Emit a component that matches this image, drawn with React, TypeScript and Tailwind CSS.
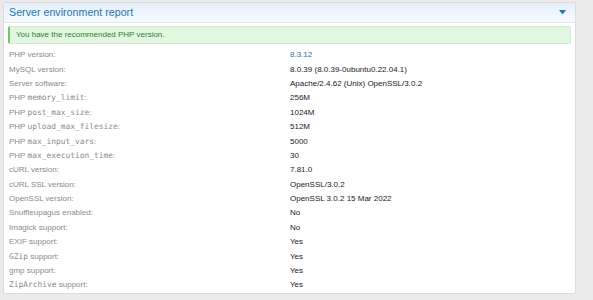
import React from "react";

type Part = { t: string; mono?: boolean };
type Row = { label: Part[]; value: string; link?: boolean };

const rows: Row[] = [
  { label: [{ t: "PHP version:" }], value: "8.3.12", link: true },
  { label: [{ t: "MySQL version:" }], value: "8.0.39 (8.0.39-0ubuntu0.22.04.1)" },
  { label: [{ t: "Server software:" }], value: "Apache/2.4.62 (Unix) OpenSSL/3.0.2" },
  { label: [{ t: "PHP " }, { t: "memory_limit", mono: true }, { t: ":" }], value: "256M" },
  { label: [{ t: "PHP " }, { t: "post_max_size", mono: true }, { t: ":" }], value: "1024M" },
  { label: [{ t: "PHP " }, { t: "upload_max_filesize", mono: true }, { t: ":" }], value: "512M" },
  { label: [{ t: "PHP " }, { t: "max_input_vars", mono: true }, { t: ":" }], value: "5000" },
  { label: [{ t: "PHP " }, { t: "max_execution_time", mono: true }, { t: ":" }], value: "30" },
  { label: [{ t: "cURL version:" }], value: "7.81.0" },
  { label: [{ t: "cURL SSL version:" }], value: "OpenSSL/3.0.2" },
  { label: [{ t: "OpenSSL version:" }], value: "OpenSSL 3.0.2 15 Mar 2022" },
  { label: [{ t: "Snuffleupagus enabled:" }], value: "No" },
  { label: [{ t: "Imagick support:" }], value: "No" },
  { label: [{ t: "EXIF support:" }], value: "Yes" },
  { label: [{ t: "GZip", mono: true }, { t: " support:" }], value: "Yes" },
  { label: [{ t: "gmp support:" }], value: "Yes" },
  { label: [{ t: "ZipArchive", mono: true }, { t: " support:" }], value: "Yes" },
];

export default function App() {
  return (
    <div
      className="w-[593px] h-[300px] bg-[#ebebeb] overflow-hidden pt-[2px] pl-[3px]"
      style={{ fontFamily: '"Liberation Sans", Arial, sans-serif' }}
    >
      <div className="w-[573px] bg-white border border-[#dcdcdc] rounded-[2px]">
        <div className="h-[20px] flex items-center justify-between pl-[5px] pr-[9px] bg-gradient-to-b from-[#e6f0fb] to-[#f6faff] border-b border-[#dde7f1]">
          <span className="text-[10.7px] text-[#2577b1] leading-none">Server environment report</span>
          <svg width="7" height="5" viewBox="0 0 7 5">
            <path d="M0 0 H7 L3.5 4.5 Z" fill="#2577b1" />
          </svg>
        </div>
        <div className="px-[4px] pt-[3px]">
          <div className="h-[18px] flex items-center bg-[#e2f7e0] border border-[#d3ecd1] border-l-[2px] border-l-[#6bc96b] rounded-[2px] pl-[6px] text-[8px] text-[#2f7d2f]">
            You have the recommended PHP version.
          </div>
        </div>
        <div className="pt-[4px]">
          {rows.map((r, i) => (
            <div key={i} className="h-[14.4px] flex items-center text-[8px] leading-none">
              <div className="w-[286px] pl-[5px] text-[#8a8a8a]">
                {r.label.map((p, j) =>
                  p.mono ? (
                    <span key={j} style={{ fontFamily: '"DejaVu Sans Mono", "Liberation Mono", monospace' }} className="text-[7.9px]">
                      {p.t}
                    </span>
                  ) : (
                    <span key={j}>{p.t}</span>
                  )
                )}
              </div>
              <div className={r.link ? "text-[#2577b1]" : "text-[#1a1a1a]"}>{r.value}</div>
            </div>
          ))}
        </div>
      </div>
    </div>
  );
}
